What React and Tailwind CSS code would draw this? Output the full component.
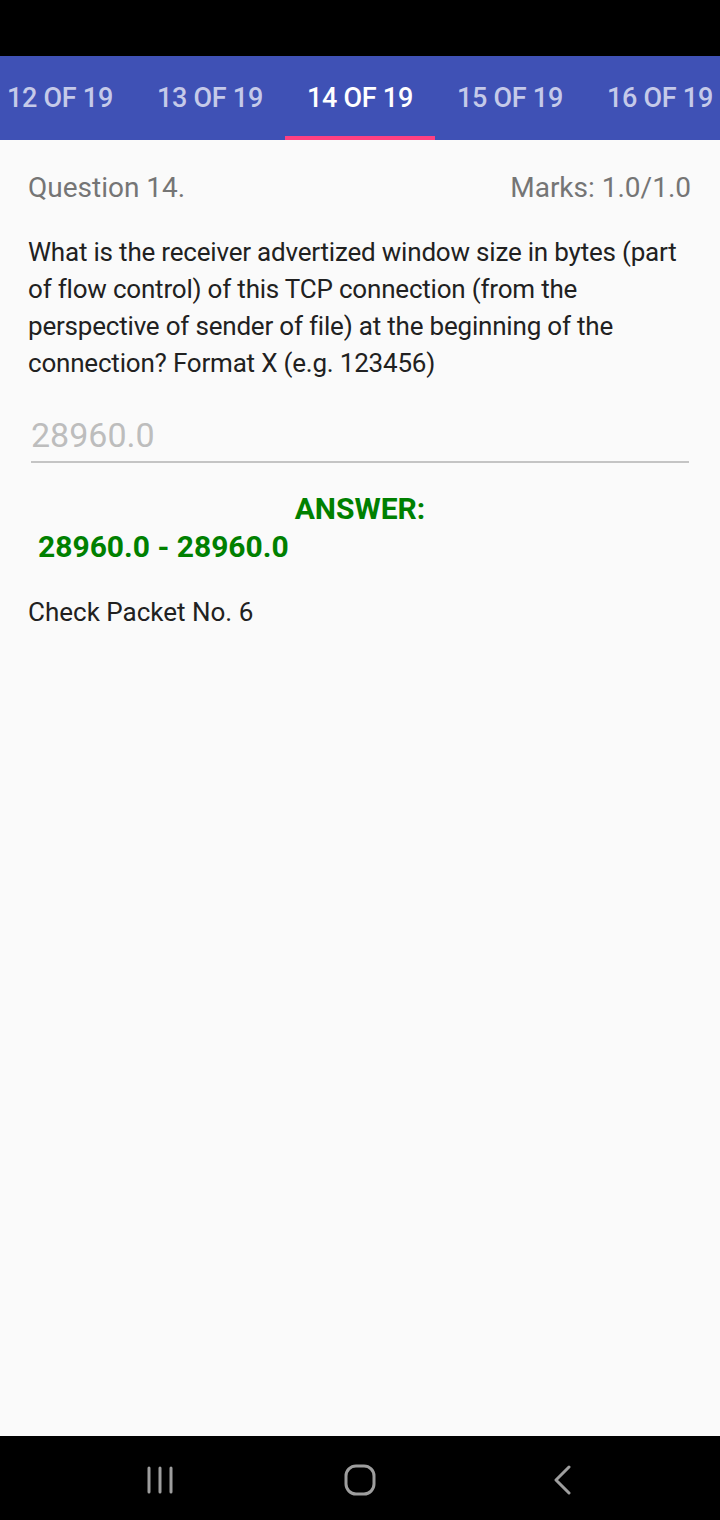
import React from "react";

const tabs = ["12 OF 19", "13 OF 19", "14 OF 19", "15 OF 19", "16 OF 19"];

const App = () => {
  const active = "14 OF 19";
  return (
    <div
      className="w-[720px] h-[1520px] flex flex-col bg-[#fafafa]"
      style={{ fontFamily: "Roboto, 'Liberation Sans', sans-serif" }}
    >
      {/* status bar */}
      <div className="h-[56px] bg-black" />

      {/* tab strip, scrolled so the current one sits in the middle */}
      <div className="h-[84px] bg-[#3f51b5] flex overflow-hidden">
        <div className="flex shrink-0 -ml-[15px]">
          {tabs.map((t) => (
            <div
              key={t}
              className={`w-[150px] shrink-0 flex flex-col ${
                t === active ? "text-white" : "text-[#c5cae9]"
              }`}
            >
              <div className="flex-1 flex items-center justify-center text-[27px] font-medium tracking-[-0.3px] pt-[5px]">
                {t}
              </div>
              <div className={`h-[4px] ${t === active ? "bg-[#ff4081]" : ""}`} />
            </div>
          ))}
        </div>
      </div>

      {/* question body */}
      <div className="flex-1 px-[28px] pt-[30px]">
        <div className="flex justify-between items-center text-[#757575] text-[28px] leading-[36px]">
          <span>Question 14.</span>
          <span className="pr-[1px]">Marks: 1.0/1.0</span>
        </div>

        <p className="mt-[28px] text-[26px] leading-[37px] text-[#212121] tracking-[-0.2px]">
          What is the receiver advertized window size in bytes (part of flow
          control) of this TCP connection (from the perspective of sender of
          file) at the beginning of the connection? Format X (e.g. 123456)
        </p>

        <div className="mt-[32px] mx-[3px] border-b-2 border-[#c4c4c4] pb-[5px]">
          <div className="text-[34px] leading-[42px] text-[#bdbdbd]">28960.0</div>
        </div>

        <div className="mt-[27px] text-[#008000] font-bold text-[30px] leading-[38px]">
          <div className="text-center">ANSWER:</div>
          <div className="pl-[10px]">28960.0 - 28960.0</div>
        </div>

        <div className="mt-[30px] text-[26px] leading-[32px] text-[#212121]">
          Check Packet No. 6
        </div>
      </div>

      {/* navigation bar */}
      <div className="h-[84px] bg-black flex items-center justify-center pt-[4px]">
        <div className="w-[200px] flex justify-center">
          <svg width="30" height="30" viewBox="0 0 30 30">
            <g stroke="#9e9e9e" strokeWidth="3" strokeLinecap="round">
              <line x1="4" y1="3" x2="4" y2="27" />
              <line x1="15" y1="3" x2="15" y2="27" />
              <line x1="26" y1="3" x2="26" y2="27" />
            </g>
          </svg>
        </div>
        <div className="w-[200px] flex justify-center">
          <svg width="32" height="32" viewBox="0 0 32 32">
            <rect x="2" y="2" width="28" height="28" rx="10" fill="none" stroke="#9e9e9e" strokeWidth="3" />
          </svg>
        </div>
        <div className="w-[200px] flex justify-center pl-[6px]">
          <svg width="20" height="30" viewBox="0 0 20 30">
            <polyline points="16,2 3,15 16,28" fill="none" stroke="#9e9e9e" strokeWidth="3" strokeLinecap="round" strokeLinejoin="round" />
          </svg>
        </div>
      </div>
    </div>
  );
};

export default App;
